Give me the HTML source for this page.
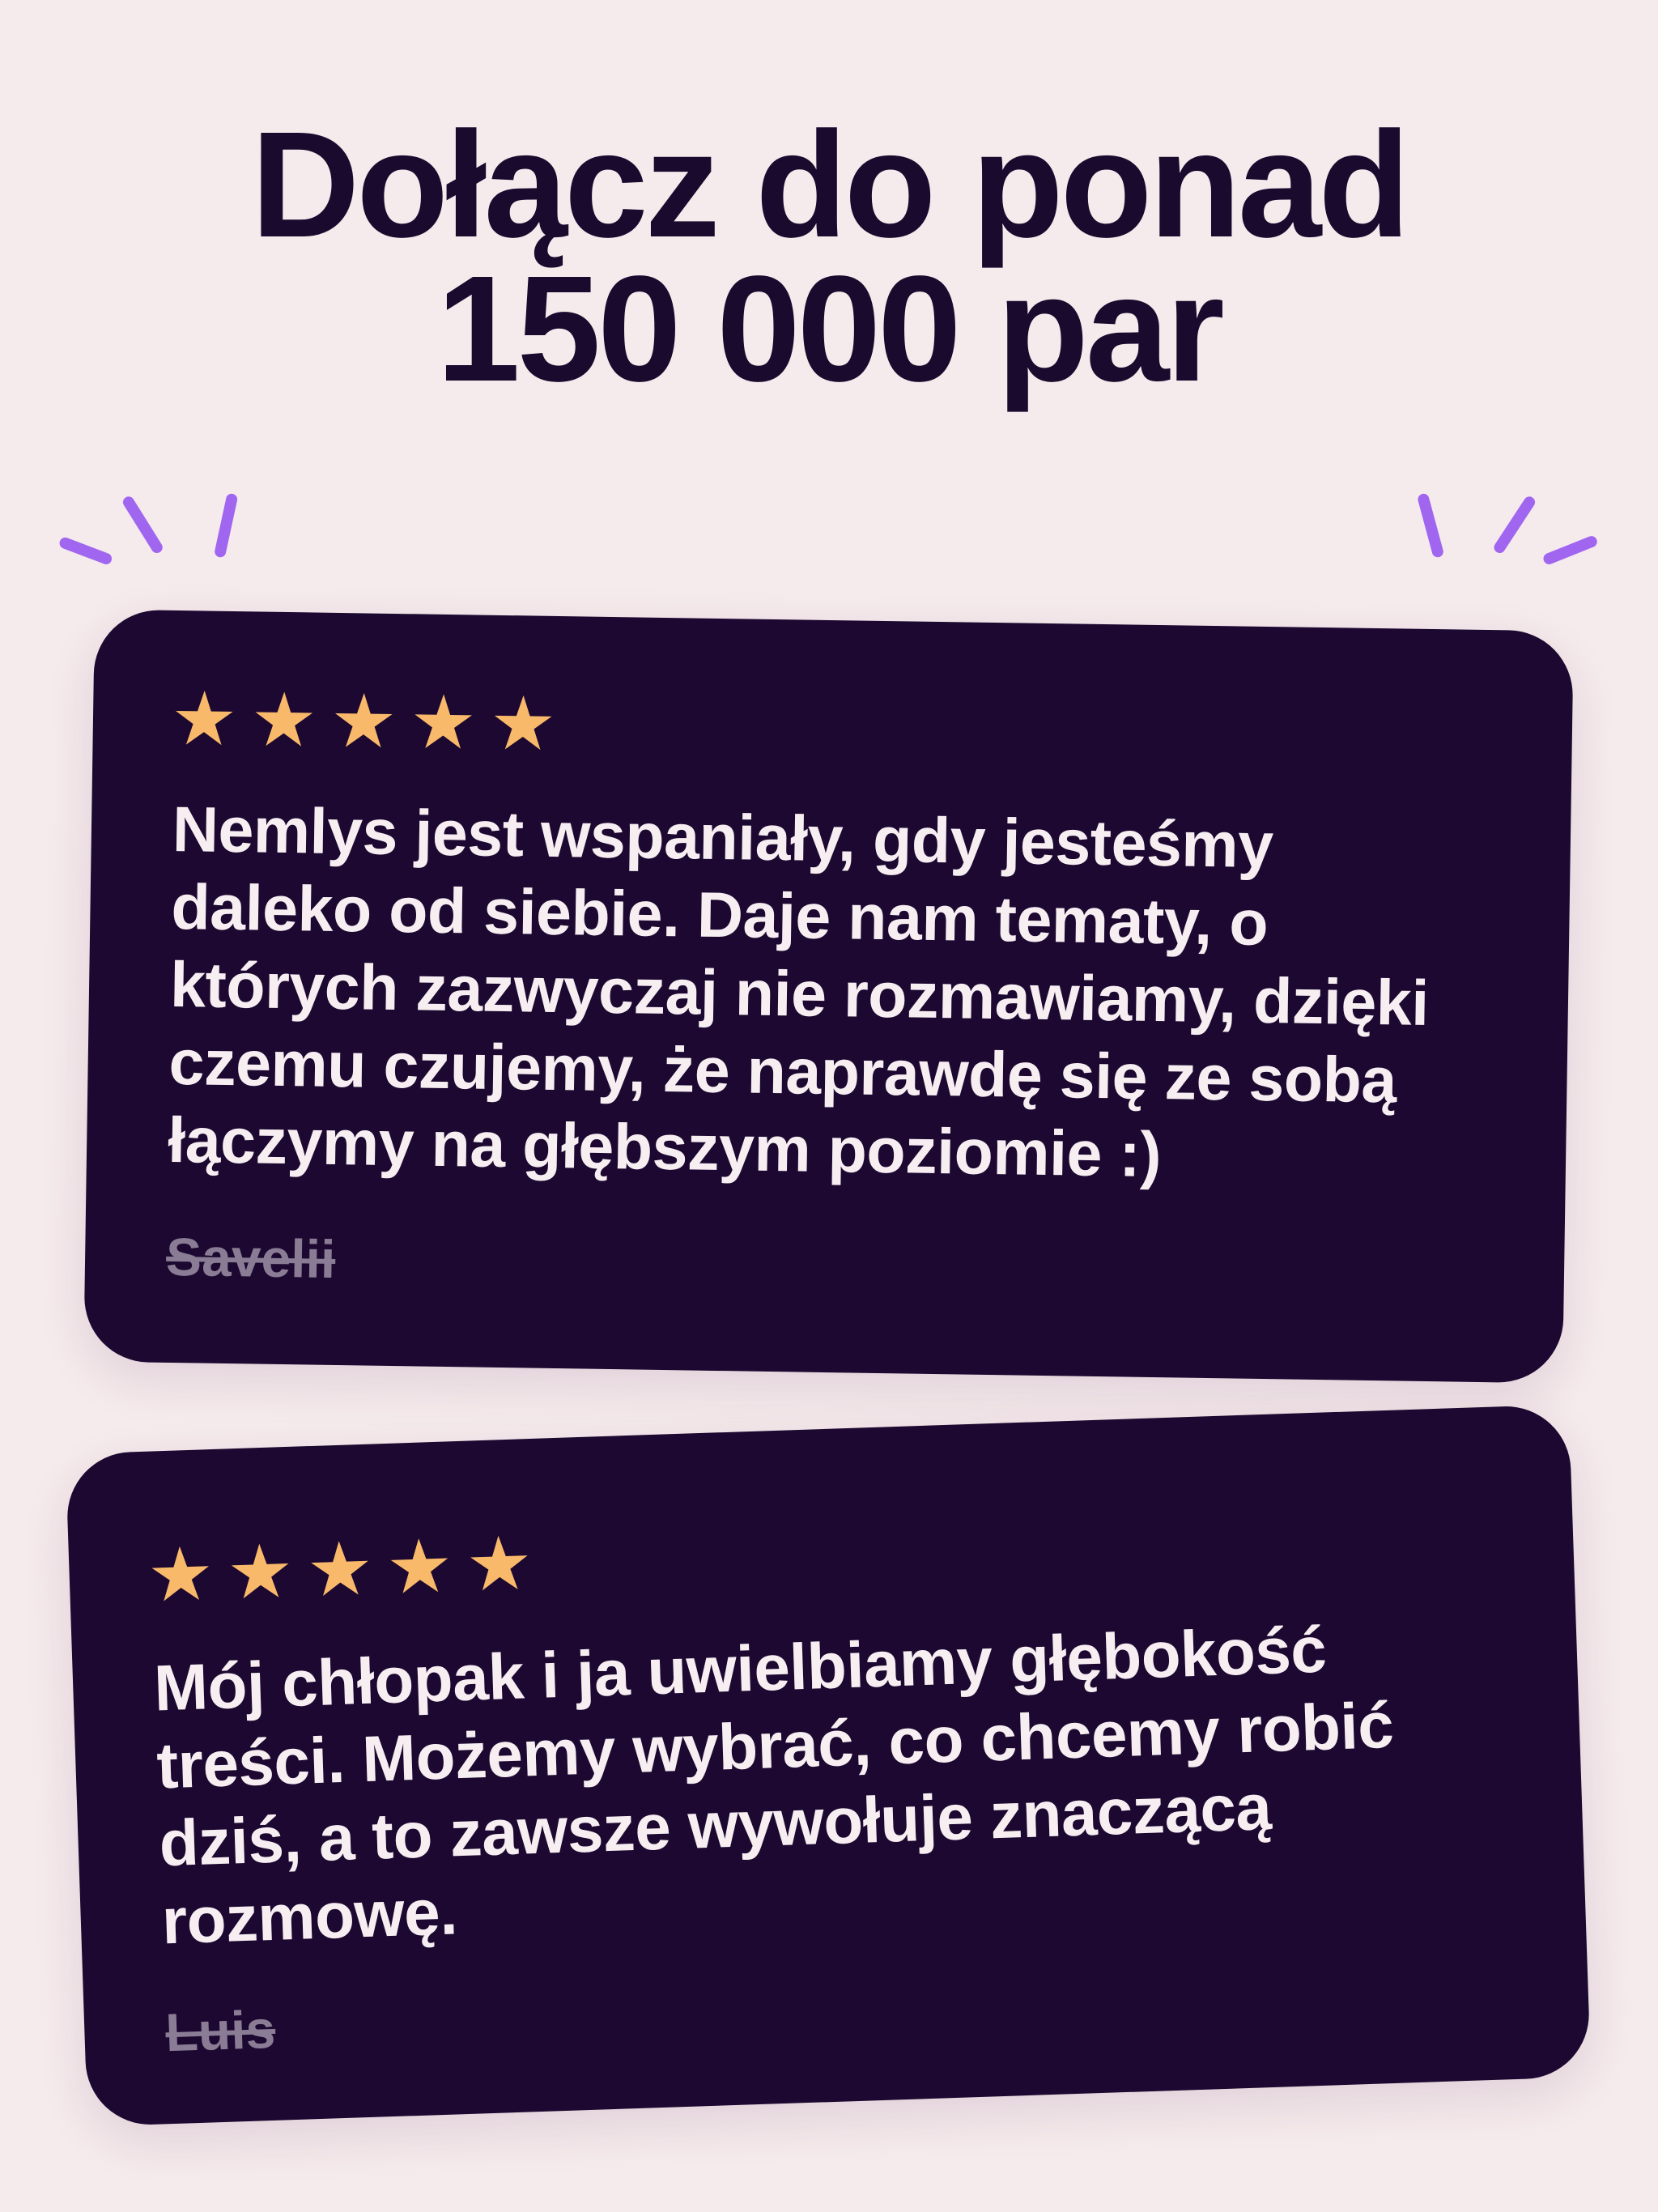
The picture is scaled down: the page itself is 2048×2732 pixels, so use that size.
<!DOCTYPE html>
<html><head><meta charset="utf-8"><style>
html,body{margin:0;padding:0}
body{width:2048px;height:2732px;background:#f5eaec;position:relative;overflow:hidden;font-family:"Liberation Sans",sans-serif}
.title{position:absolute;left:0;width:2048px;top:140px;text-align:center;color:#1a0a2e;font-weight:bold;font-size:186px;line-height:178px;letter-spacing:-4px}
.card{position:absolute;background:#1c0830;border-radius:80px;box-shadow:0 20px 60px rgba(80,30,80,0.12);color:#f7eef2}
.stars{position:absolute;font-size:92px;color:#f9b96a;letter-spacing:16px;line-height:1}
.txt{position:absolute;font-size:79px;line-height:96px;font-weight:bold;letter-spacing:-0.5px;white-space:nowrap}
.auth{position:absolute;font-size:66px;font-weight:bold;color:#8a7c95;text-decoration:line-through}
</style></head><body>
<div class="title">Dołącz do ponad<br>150 000 par</div>
<svg style="position:absolute;left:0;top:0" width="2048" height="2732" viewBox="0 0 1175 1568">
<g stroke="#a066f0" stroke-width="8" stroke-linecap="round" fill="none">
<line x1="46" y1="385" x2="75" y2="396"/><line x1="91" y1="356" x2="111" y2="388"/><line x1="164" y1="354" x2="156" y2="391"/>
<line x1="1009" y1="354" x2="1019" y2="391"/><line x1="1084" y1="356" x2="1063" y2="388"/><line x1="1128" y1="384" x2="1098" y2="396"/>
</g></svg>
<div class="card" style="left:110px;top:766px;width:1827px;height:929px;transform:rotate(0.85deg)">
<div class="stars" style="left:96px;top:88px">★★★★★</div>
<div class="txt" style="left:100px;top:222px">Nemlys jest wspaniały, gdy jesteśmy<br>daleko od siebie. Daje nam tematy, o<br>których zazwyczaj nie rozmawiamy, dzięki<br>czemu czujemy, że naprawdę się ze sobą<br>łączymy na głębszym poziomie :)</div>
<div class="auth" style="left:100px;top:760px">Savelii</div>
</div>
<div class="card" style="left:94px;top:1765px;width:1858px;height:831px;transform:rotate(-1.9deg)">
<div class="stars" style="left:96px;top:108px">★★★★★</div>
<div class="txt" style="left:100px;top:245px;font-size:80px">Mój chłopak i ja uwielbiamy głębokość<br>treści. Możemy wybrać, co chcemy robić<br>dziś, a to zawsze wywołuje znaczącą<br>rozmowę.</div>
<div class="auth" style="left:100px;top:680px">Luis</div>
</div>
</body></html>
